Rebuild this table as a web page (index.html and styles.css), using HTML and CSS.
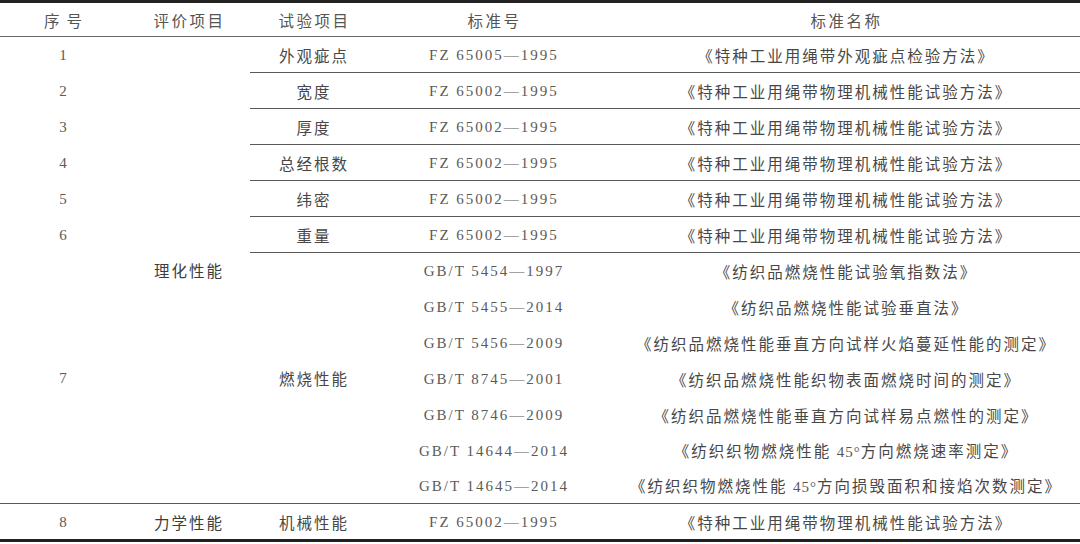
FILE: index.html
```html
<!DOCTYPE html>
<html lang="zh">
<head>
<meta charset="utf-8">
<link rel="stylesheet" href="styles.css">
</head>
<body>
<table class="std">
  <colgroup>
    <col class="c1"><col class="c2"><col class="c3"><col class="c4"><col class="c5">
  </colgroup>
  <thead>
    <tr class="head">
      <th class="hnum">序号</th><th>评价项目</th><th>试验项目</th><th>标准号</th><th>标准名称</th>
    </tr>
  </thead>
  <tbody>
    <tr class="r">
      <td class="num">1</td>
      <td class="cat" rowspan="13">理化性能</td>
      <td class="ln">外观疵点</td>
      <td class="ln code">FZ 65005—1995</td>
      <td class="ln">《特种工业用绳带外观疵点检验方法》</td>
    </tr>
    <tr class="r">
      <td class="num">2</td>
      <td class="ln">宽度</td>
      <td class="ln code">FZ 65002—1995</td>
      <td class="ln">《特种工业用绳带物理机械性能试验方法》</td>
    </tr>
    <tr class="r">
      <td class="num">3</td>
      <td class="ln">厚度</td>
      <td class="ln code">FZ 65002—1995</td>
      <td class="ln">《特种工业用绳带物理机械性能试验方法》</td>
    </tr>
    <tr class="r">
      <td class="num">4</td>
      <td class="ln">总经根数</td>
      <td class="ln code">FZ 65002—1995</td>
      <td class="ln">《特种工业用绳带物理机械性能试验方法》</td>
    </tr>
    <tr class="r">
      <td class="num">5</td>
      <td class="ln">纬密</td>
      <td class="ln code">FZ 65002—1995</td>
      <td class="ln">《特种工业用绳带物理机械性能试验方法》</td>
    </tr>
    <tr class="r">
      <td class="num">6</td>
      <td class="ln">重量</td>
      <td class="ln code">FZ 65002—1995</td>
      <td class="ln">《特种工业用绳带物理机械性能试验方法》</td>
    </tr>
    <tr class="s">
      <td class="num" rowspan="7">7</td>
      <td rowspan="7">燃烧性能</td>
      <td class="code">GB/T 5454—1997</td>
      <td>《纺织品燃烧性能试验氧指数法》</td>
    </tr>
    <tr class="s">
      <td class="code">GB/T 5455—2014</td>
      <td>《纺织品燃烧性能试验垂直法》</td>
    </tr>
    <tr class="s">
      <td class="code">GB/T 5456—2009</td>
      <td>《纺织品燃烧性能垂直方向试样火焰蔓延性能的测定》</td>
    </tr>
    <tr class="s">
      <td class="code">GB/T 8745—2001</td>
      <td>《纺织品燃烧性能织物表面燃烧时间的测定》</td>
    </tr>
    <tr class="s">
      <td class="code">GB/T 8746—2009</td>
      <td>《纺织品燃烧性能垂直方向试样易点燃性的测定》</td>
    </tr>
    <tr class="s short">
      <td class="code">GB/T 14644—2014</td>
      <td>《纺织织物燃烧性能 <span class="lat">45°</span>方向燃烧速率测定》</td>
    </tr>
    <tr class="s short">
      <td class="code">GB/T 14645—2014</td>
      <td>《纺织织物燃烧性能 <span class="lat">45°</span>方向损毁面积和接焰次数测定》</td>
    </tr>
    <tr class="last">
      <td class="num">8</td>
      <td class="cat">力学性能</td>
      <td>机械性能</td>
      <td class="code">FZ 65002—1995</td>
      <td>《特种工业用绳带物理机械性能试验方法》</td>
    </tr>
  </tbody>
</table>
</body>
</html>
```

FILE: styles.css
```css
html, body {
  margin: 0;
  padding: 0;
  background: #ffffff;
}

body {
  width: 1080px;
  height: 544px;
  overflow: hidden;
  font-family: "Liberation Serif", "Noto Sans CJK SC", serif;
  color: #474747;
}

.std {
  width: 1080px;
  border-collapse: separate;
  border-spacing: 0;
  table-layout: fixed;
  border-top: 3px solid #222222;
  border-bottom: 3px solid #222222;
}

.c1 { width: 126px; }
.c2 { width: 124px; }
.c3 { width: 126px; }
.c4 { width: 234px; }
.c5 { width: 470px; }

.std th,
.std td {
  padding: 0 0 0 2px;
  text-align: center;
  vertical-align: middle;
  box-sizing: border-box;
  white-space: nowrap;
  font-family: "Noto Sans CJK SC", sans-serif;
  font-weight: 400;
  font-size: 15.5px;
  letter-spacing: 2px;
  line-height: 20px;
}

.std th {
  height: 34px;
  letter-spacing: 2.5px;
  padding-left: 3px;
  color: #555555;
  border-bottom: 1px solid #6a6a6a;
}

.std th.hnum {
  letter-spacing: 7px;
  padding-left: 7px;
}

.std tr.r td { height: 36px; }
.std tr.s td { height: 36px; }
.std tr.s.short td { height: 35px; }

.std td.ln {
  border-bottom: 1px solid #5a5a5a;
}

.std td.num,
.std td.code {
  font-family: "Liberation Serif", serif;
  font-size: 15px;
  color: #5a5a5a;
}

.std td.num {
  letter-spacing: 0;
  padding-left: 0;
}

.std td.code {
  letter-spacing: 2px;
}

.std .lat {
  font-family: "Liberation Serif", serif;
  font-size: 15px;
  letter-spacing: 1px;
  color: #555555;
}

.std td.cat {
  color: #3c3c3c;
}

.std tr.last td {
  height: 36px;
  border-top: 1px solid #5a5a5a;
}
```
